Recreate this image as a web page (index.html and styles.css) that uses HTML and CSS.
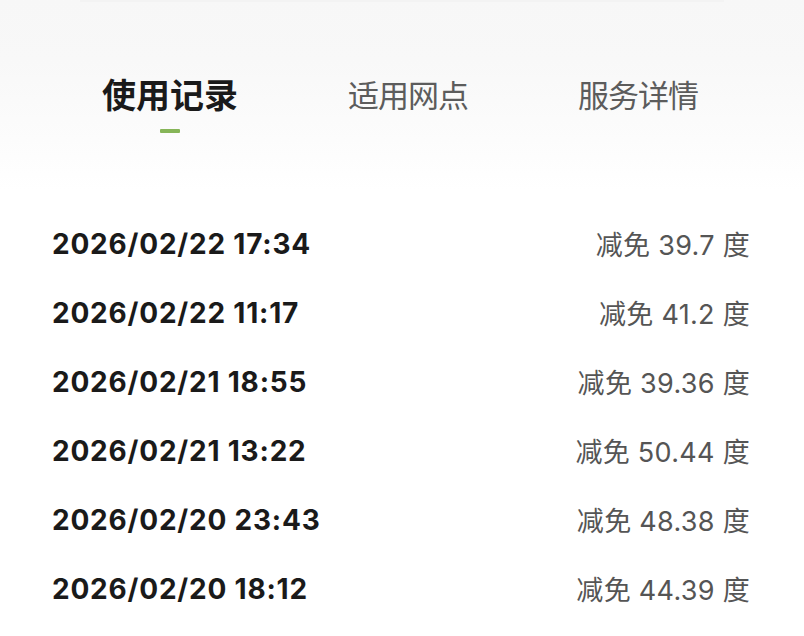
FILE: index.html
```html
<!DOCTYPE html>
<html lang="zh-CN">
<head>
<meta charset="utf-8">
<title>使用记录</title>
<link rel="stylesheet" href="styles.css">
</head>
<body>
<div class="page">
  <div class="top-edge"></div>
  <nav class="tabs">
    <div class="tab tab-active">
      <span class="tab-label">使用记录</span>
      <span class="tab-bar"></span>
    </div>
    <div class="tab tab-mid">
      <span class="tab-label">适用网点</span>
    </div>
    <div class="tab tab-last">
      <span class="tab-label">服务详情</span>
    </div>
  </nav>
  <ul class="records">
    <li class="record"><span class="record-time">2026/02/22 17:34</span><span class="record-value">减免 39.7 度</span></li>
    <li class="record"><span class="record-time">2026/02/22 11:17</span><span class="record-value">减免 41.2 度</span></li>
    <li class="record"><span class="record-time">2026/02/21 18:55</span><span class="record-value">减免 39.36 度</span></li>
    <li class="record"><span class="record-time">2026/02/21 13:22</span><span class="record-value">减免 50.44 度</span></li>
    <li class="record"><span class="record-time">2026/02/20 23:43</span><span class="record-value">减免 48.38 度</span></li>
    <li class="record"><span class="record-time">2026/02/20 18:12</span><span class="record-value">减免 44.39 度</span></li>
  </ul>
</div>
</body>
</html>
```
FILE: styles.css
```css
html, body {
  margin: 0;
  padding: 0;
  background: #ffffff;
}

body {
  font-family: Inter, "Noto Sans CJK SC", sans-serif;
  color: #1a1a1a;
}

.page {
  width: 804px;
  height: 636px;
  overflow: hidden;
  background: linear-gradient(to bottom, #f7f7f7 0px, #f8f8f8 60px, #fcfcfc 140px, #ffffff 190px);
}

.top-edge {
  height: 2px;
  margin: 0 80px;
  background: #f3f3f3;
}

.tabs {
  display: flex;
  align-items: flex-start;
  padding: 72px 0 0 102px;
  height: 61px;
}

.tab {
  display: flex;
  flex-direction: column;
  align-items: center;
}

.tab-label {
  font-family: "Noto Sans CJK SC", sans-serif;
  font-size: 31px;
  line-height: 40px;
  color: #5c5c5c;
  letter-spacing: -1px;
}

.tab-active .tab-label {
  font-size: 34px;
  font-weight: 700;
  color: #1a1a1a;
  letter-spacing: 0;
}

.tab-bar {
  width: 20px;
  height: 4px;
  margin-top: 15px;
  background: #86b558;
  border-radius: 1px;
}

.tab-mid {
  margin-left: 110px;
}

.tab-last {
  margin-left: 110px;
}

.records {
  list-style: none;
  margin: 74px 0 0;
  padding: 0 54px 0 52px;
}

.record {
  display: flex;
  justify-content: space-between;
  align-items: center;
  height: 69px;
}

.record-time {
  font-size: 28px;
  font-weight: 700;
  color: #1a1a1a;
  letter-spacing: 0.8px;
}

.record-value {
  font-size: 27px;
  color: #555555;
  letter-spacing: 0.3px;
}
```
